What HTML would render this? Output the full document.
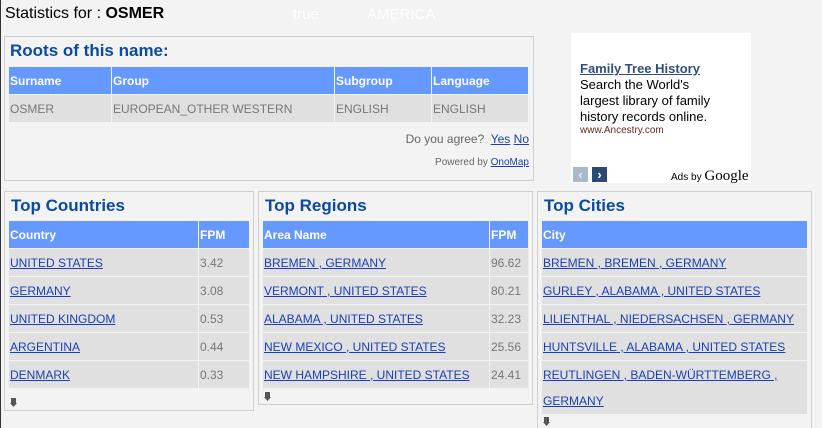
<!DOCTYPE html>
<html style="overflow:hidden;height:428px"><head><meta charset="utf-8"><style>
*{margin:0;padding:0;box-sizing:border-box}
body{width:822px;height:428px;background:#f3f3f3;font-family:"Liberation Sans",Arial,sans-serif;position:relative;overflow:hidden;font-size:12px}
.a{position:absolute}
.box{position:absolute;border:1px solid #cfcfcf;background:#f3f3f3}
h2{position:absolute;font-size:17px;font-weight:bold;color:#0b4aa3;white-space:nowrap}
table{position:absolute;border-collapse:separate;border-spacing:1px 1px}
th{background:#6699ff;color:#fff;text-align:left;font-weight:bold;height:27px;padding:1px 1px 0;font-size:12px}
td{background:#e0e0e0;height:27px;padding:1px 1px 0;color:#777;font-size:12px;white-space:nowrap}
td a{color:#1a3fb8;text-decoration:underline}
.ic{position:absolute;width:7px;height:9px}
</style></head><body>
<div class="a" style="left:0;top:0;width:1px;height:428px;background:#333"></div>
<div class="a" style="left:5px;top:5px;font-size:16px;color:#000">Statistics for : <b>OSMER</b></div>
<div class="a" style="left:293px;top:6px;font-size:15px;color:#fff">true</div>
<div class="a" style="left:367px;top:6px;font-size:15px;color:#fff">AMERICA</div>

<div class="box" style="left:4px;top:36px;width:530px;height:145px"></div>
<h2 style="left:10px;top:41px">Roots of this name:</h2>
<table style="left:8px;top:66px;width:521px">
<tr><th style="width:102px">Surname</th><th style="width:222px">Group</th><th style="width:96px">Subgroup</th><th>Language</th></tr>
<tr><td>OSMER</td><td>EUROPEAN_OTHER WESTERN</td><td>ENGLISH</td><td>ENGLISH</td></tr>
</table>
<div class="a" style="right:293px;top:132px;color:#666;font-size:12px">Do you agree?&nbsp; <a style="color:#1a3fb8;text-decoration:underline">Yes</a> <a style="color:#1a3fb8;text-decoration:underline">No</a></div>
<div class="a" style="right:293px;top:157px;color:#666;font-size:10px">Powered by <a style="color:#1a3fb8;text-decoration:underline">OnoMap</a></div>

<div class="a" style="left:571px;top:33px;width:180px;height:150px;background:#fff"></div>
<div class="a" style="left:580px;top:61px;font-size:13px;font-weight:bold;color:#2f4f80;text-decoration:underline">Family Tree History</div>
<div class="a" style="left:580px;top:77px;font-size:13px;line-height:16px;color:#000;width:170px">Search the World's<br>largest library of family<br>history records online.</div>
<div class="a" style="left:580px;top:125px;font-size:10px;color:#6b2a1a">www.Ancestry.com</div>
<div class="a" style="left:573px;top:167px;width:15px;height:15px;background:#aab8cc;color:#fff;font-size:13px;line-height:15px;text-align:center">‹</div>
<div class="a" style="left:592px;top:167px;width:15px;height:15px;background:#2c4a78;color:#fff;font-size:13px;line-height:15px;text-align:center;font-weight:bold">›</div>
<div class="a" style="left:671px;top:168px;font-size:10px;color:#000">Ads by <span style="font-family:'Liberation Serif',serif;font-size:15px">Google</span></div>

<div class="box" style="left:4px;top:191px;width:250px;height:220px"></div>
<h2 style="left:11px;top:196px">Top Countries</h2>
<table style="left:8px;top:220px;width:242px">
<tr><th>Country</th><th style="width:50px">FPM</th></tr>
<tr><td><a>UNITED STATES</a></td><td>3.42</td></tr>
<tr><td><a>GERMANY</a></td><td>3.08</td></tr>
<tr><td><a>UNITED KINGDOM</a></td><td>0.53</td></tr>
<tr><td><a>ARGENTINA</a></td><td>0.44</td></tr>
<tr><td><a>DENMARK</a></td><td>0.33</td></tr>
</table>
<div class="ic" style="left:10px;top:396px"><svg width="7" height="9"><path d="M1 0h5v5h1l-3.5 4L0 5h1z" fill="#555"/></svg></div>

<div class="box" style="left:258px;top:191px;width:275px;height:214px"></div>
<h2 style="left:265px;top:196px">Top Regions</h2>
<table style="left:262px;top:220px;width:267px">
<tr><th>Area Name</th><th style="width:38px">FPM</th></tr>
<tr><td><a>BREMEN , GERMANY</a></td><td>96.62</td></tr>
<tr><td><a>VERMONT , UNITED STATES</a></td><td>80.21</td></tr>
<tr><td><a>ALABAMA , UNITED STATES</a></td><td>32.23</td></tr>
<tr><td><a>NEW MEXICO , UNITED STATES</a></td><td>25.56</td></tr>
<tr><td><a>NEW HAMPSHIRE , UNITED STATES</a></td><td>24.41</td></tr>
</table>
<div class="ic" style="left:264px;top:390px"><svg width="7" height="9"><path d="M1 0h5v5h1l-3.5 4L0 5h1z" fill="#555"/></svg></div>

<div class="box" style="left:537px;top:191px;width:275px;height:245px"></div>
<h2 style="left:544px;top:196px">Top Cities</h2>
<table style="left:541px;top:220px;width:267px">
<tr><th>City</th></tr>
<tr><td><a>BREMEN , BREMEN , GERMANY</a></td></tr>
<tr><td><a>GURLEY , ALABAMA , UNITED STATES</a></td></tr>
<tr><td><a>LILIENTHAL , NIEDERSACHSEN , GERMANY</a></td></tr>
<tr><td><a>HUNTSVILLE , ALABAMA , UNITED STATES</a></td></tr>
<tr><td style="height:52px;line-height:26px;white-space:normal"><a>REUTLINGEN , BADEN-WÜRTTEMBERG ,<br>GERMANY</a></td></tr>
</table>
<div class="ic" style="left:543px;top:415px"><svg width="7" height="9"><path d="M1 0h5v5h1l-3.5 4L0 5h1z" fill="#555"/></svg></div>
</body></html>
